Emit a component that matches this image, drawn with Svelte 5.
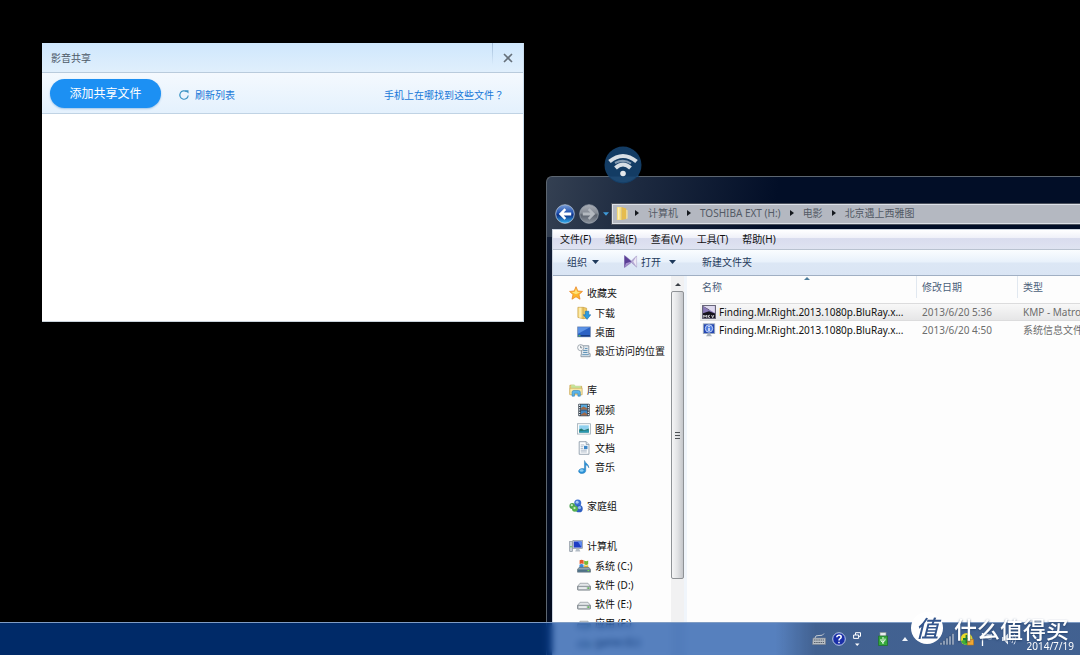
<script>
  const crumbs = ['计算机', 'TOSHIBA EXT (H:)', '电影', '北京遇上西雅图'];
  const menus = ['文件(F)', '编辑(E)', '查看(V)', '工具(T)', '帮助(H)'];
  const groups = [
    { icon: 'star', label: '收藏夹', items: [['download', '下载'], ['desktop', '桌面'], ['recent', '最近访问的位置']] },
    { icon: 'library', label: '库', items: [['video', '视频'], ['picture', '图片'], ['document', '文档'], ['music', '音乐']] },
    { icon: 'homegroup', label: '家庭组', items: [] },
    { icon: 'computer', label: '计算机', items: [['system', '系统 (C:)'], ['drive', '软件 (D:)'], ['drive', '软件 (E:)'], ['drive', '应用 (F:)'], ['drive', 'game (G:)']] }
  ];
  const files = [
    { icon: 'mkv', name: 'Finding.Mr.Right.2013.1080p.BluRay.x...', date: '2013/6/20 5:36', type: 'KMP - Matroska', selected: true },
    { icon: 'info', name: 'Finding.Mr.Right.2013.1080p.BluRay.x...', date: '2013/6/20 4:50', type: '系统信息文件', selected: false }
  ];
</script>

{#snippet icon(name)}
  <svg class="icon" viewBox="0 0 16 16" aria-hidden="true">
    {#if name === 'star'}
      <path d="M8 .8l2.1 4.9 5.3.5-4 3.6 1.2 5.3L8 12.3l-4.6 2.8 1.2-5.3-4-3.6 5.3-.5z" fill="#fdb62c" stroke="#e8862a" stroke-width=".9" />
      <path d="M8 3l1.4 3.7 3.6.3-5 2.4L3 7l3.6-.3z" fill="#ffe27a" />
    {:else if name === 'download'}
      <path d="M1 1.500h6v13L1 13z" fill="#f7dc84" stroke="#c9a14a" stroke-width=".8" />
      <path d="M7 1.500l4 1v11.500l-4 .5z" fill="#f2cb62" stroke="#c9a14a" stroke-width=".8" />
      <path d="M3.500 2v11.500" stroke="#fff3c0" stroke-width="1.500" />
      <path d="M9.500 6h4v4h2.300l-4.300 5.300L7.200 10h2.300z" fill="#2c9be0" stroke="#1668a8" stroke-width=".6" />
    {:else if name === 'desktop'}
      <rect x=".7" y="2.200" width="14.600" height="11.300" fill="#2b62c4" stroke="#7d93b5" stroke-width=".9" />
      <path d="M1.200 2.700h13.600L1.200 10z" fill="#5c93e6" />
      <rect x="1.200" y="11.500" width="13.600" height="1.700" fill="#173a80" />
      <rect x="1.500" y="11.700" width="2.500" height="1.300" fill="#6ad06a" />
    {:else if name === 'recent'}
      <path d="M5 2h8.500v9H15v3.500H4.500V12H5z" fill="#dfe7ed" stroke="#7c8995" stroke-width=".9" />
      <path d="M6 12.200h7.500M7 7.500h5M7 9.700h5M9 5.200h3" stroke="#5a8fb4" stroke-width="1.100" />
      <circle cx="4.200" cy="4.200" r="3.500" fill="#f8fafb" stroke="#8d979f" stroke-width=".9" />
      <path d="M4.200 2v2.400H6" stroke="#4a5a68" stroke-width=".8" fill="none" />
    {:else if name === 'library'}
      <path d="M1 2.500h5l1 1.300h7.500V13H1z" fill="#f3d57a" stroke="#c39b43" stroke-width=".8" />
      <path d="M2.500 2h4l1 1.500h6v3h-11z" fill="#c5e39a" />
      <path d="M1 6h14v7.500H1z" fill="#fbe9a6" stroke="#c9a955" stroke-width=".7" />
      <path d="M3.500 15V10.500q0-2 2.200-2h5q2.200 0 2.200 2V15h-2.700v-3.200H6.200V15z" fill="#5bb5ea" stroke="#2a7db6" stroke-width=".7" />
    {:else if name === 'video'}
      <rect x="1.500" y=".8" width="13" height="14.400" rx=".8" fill="#35404c" />
      <rect x="4.500" y="1.800" width="7" height="5.700" fill="#58a8dc" />
      <rect x="4.500" y="8.500" width="7" height="5.700" fill="#3e86c4" />
      <path d="M4.500 6l3-2 4 2v1.500h-7zM4.500 13l4-2.500 3 2v1.700h-7z" fill="#a06a48" />
      <path d="M3 1.800v13M13 1.800v13" stroke="#dfe6ec" stroke-width="1.400" stroke-dasharray="1.500 1.200" />
    {:else if name === 'picture'}
      <rect x=".7" y="2" width="14.600" height="11.800" fill="#fafcfc" stroke="#8fa0ac" stroke-width=".8" />
      <rect x="2.500" y="3.800" width="11" height="8.200" fill="#8fd0ee" />
      <path d="M2.500 8.500l2.500-1.200 3 2 5.500-1.800V12h-11z" fill="#267a72" />
      <path d="M2.500 10.500l11-1V12h-11z" fill="#2a97b2" />
    {:else if name === 'document'}
      <path d="M2.500.8h8l3.200 3.200v11.200H2.500z" fill="#fcfdfe" stroke="#8190a0" stroke-width=".9" />
      <path d="M10.500.8V4h3.200" fill="#dbe5ee" stroke="#8190a0" stroke-width=".8" />
      <path d="M4.200 4.500h4M4.200 6.500h3M4.200 8.500h3M4.200 10.500h7M4.200 12.500h7" stroke="#9aaaba" stroke-width=".9" />
      <rect x="8" y="5.500" width="4" height="3.800" fill="#3d86c6" />
    {:else if name === 'music'}
      <path d="M8.500.5c.6 3 5.300 4 5 8.500-.6-2-2-3-3.500-3.200V12c0 2.200-2 3.500-4.300 3.500S1.500 14 1.800 12.500s2.400-3 4.700-2.700c.8 0 2 .5 2 .5z" fill="#2a92d8" stroke="#1b6fae" stroke-width=".5" />
      <ellipse cx="5.300" cy="12" rx="2.200" ry="1.400" fill="#8fd0f5" />
    {:else if name === 'homegroup'}
      <circle cx="10" cy="4.500" r="4" fill="#3c6fd0" />
      <circle cx="3.800" cy="8" r="3.300" fill="#4aa04c" />
      <circle cx="11.500" cy="11" r="4.200" fill="#2f5fc2" />
      <circle cx="6.800" cy="11.200" r="3.400" fill="#55b04e" />
      <circle cx="9.300" cy="3.600" r="1.700" fill="#a8cbf5" />
      <circle cx="3.200" cy="7" r="1.300" fill="#c8ecc0" />
      <circle cx="12" cy="9.800" r="1.800" fill="#8fb8f0" />
      <circle cx="6.300" cy="10.300" r="1.300" fill="#c8ecc0" />
    {:else if name === 'computer'}
      <rect x=".8" y="3" width="3.200" height="11.500" fill="#c9d0d8" stroke="#7b8794" stroke-width=".7" />
      <rect x="1.500" y="8" width="1.500" height="1.500" fill="#55c03c" />
      <rect x="4.500" y="1.800" width="11" height="9" fill="#dfe4ea" stroke="#77838f" stroke-width=".7" />
      <rect x="5.500" y="2.800" width="9" height="7" fill="#1d3cc4" />
      <path d="M10 2.800h4.500v7z" fill="#5f8df0" />
      <path d="M8.500 11h3l1.500 3.200H7z" fill="#b3bcc6" />
    {:else if name === 'system'}
      <path d="M3 1.500q2.200-1.500 4.600 0v4.300q-2.300-1.300-4.600 0z" fill="#e65a2a" />
      <path d="M8.200 1.800q2.300 1.300 4.600 0v4.300q-2.300 1.300-4.600 0z" fill="#79b832" />
      <path d="M2.800 6.500q2.200-1.300 4.700 0v4H2.800z" fill="#3c8ad8" />
      <path d="M8.200 6.800q2.300 1.300 4.600 0v4H8.200z" fill="#f5bd2c" />
      <path d="M2.500 9.500h11L15.500 12v3H.5v-3z" fill="#8fa3b0" stroke="#52636f" stroke-width=".7" />
      <rect x="1" y="12" width="14" height="2.700" fill="#4e7186" />
      <rect x="12" y="12.600" width="2" height="1.300" fill="#7be04c" />
    {:else if name === 'drive'}
      <path d="M3.500 6h9l2.800 3.500v4H.7v-4z" fill="#e4e7e9" stroke="#8a9298" stroke-width=".8" />
      <path d="M.7 9.500h14.600V13q0 .8-1 .8H1.700q-1 0-1-.8z" fill="#bcc2c7" stroke="#747c83" stroke-width=".8" />
      <rect x="2" y="10.500" width="9" height="2" fill="#eceff0" />
      <rect x="12" y="10.800" width="2" height="1.500" fill="#4fb83c" />
    {:else if name === 'mkv'}
      <rect x=".4" y=".4" width="15.200" height="15.200" fill="#15131c" stroke="#6c6880" stroke-width=".8" />
      <path d="M1.200 1.200l6.500 4.300 7-4.300v8.500L8 7 1.200 9.500z" fill="#8a7ab8" />
      <path d="M1.200 1.200L14.700 9V1.200z" fill="#ded9ef" />
      <path d="M2 14.500v-3l1.500 2 1.500-2v3M7 11.500v3M9 11.500L7 13l2 1.500M11 11.500l1.200 3 1.300-3" fill="none" stroke="#e8e8ee" stroke-width="1" />
    {:else if name === 'info'}
      <rect x="1.500" y="1" width="13" height="11" fill="#2447b4" stroke="#9ba8b8" stroke-width="1" />
      <circle cx="8" cy="6.300" r="4.200" fill="#4e7ce0" stroke="#e3ecfc" stroke-width=".9" />
      <path d="M8 5.700V9M8 3.500v1.300" stroke="#fff" stroke-width="1.500" />
      <path d="M6.500 12.500h3l2 2.500h-7z" fill="#a7b0ba" />
    {/if}
  </svg>
{/snippet}

<main class="screen">
  <section class="share" aria-label="影音共享">
    <header class="share-title">
      <h1>影音共享</h1>
      <button class="close" aria-label="关闭">
        <svg viewBox="0 0 10 10"><path d="M1 1l8 8M9 1L1 9" stroke="#66707a" stroke-width="1.600" /></svg>
      </button>
    </header>
    <div class="share-bar">
      <button class="add">添加共享文件</button>
      <a class="refresh" href="#refresh">
        <svg viewBox="0 0 12 12"><path d="M10.200 6.500A4.200 4.200 0 1 1 8.700 2.800" fill="none" stroke="#3c94c4" stroke-width="1.200" /><path d="M6.800 1.200h3.700v3.300z" fill="#3c94c4" /></svg>
        刷新列表
      </a>
      <a class="where" href="#help">手机上在哪找到这些文件？</a>
    </div>
  </section>

  <section class="explorer" aria-label="资源管理器">
    <div class="address-row">
      <button class="nav" aria-label="后退">
        <svg viewBox="0 0 20 20">
          <defs>
            <linearGradient id="back" x1="0" y1="0" x2="0" y2="1"><stop offset="0" stop-color="#7a9ed8" /><stop offset=".45" stop-color="#1d4fae" /><stop offset=".55" stop-color="#0b2f84" /><stop offset="1" stop-color="#35b4f4" /></linearGradient>
            <linearGradient id="fwd" x1="0" y1="0" x2="0" y2="1"><stop offset="0" stop-color="#a9aeb6" /><stop offset=".45" stop-color="#858b95" /><stop offset=".55" stop-color="#5c636f" /><stop offset="1" stop-color="#8e959f" /></linearGradient>
          </defs>
          <circle cx="10" cy="10" r="9.300" fill="url(#back)" stroke="#b9c8dc" stroke-width=".8" />
          <path d="M9.500 4.300L3.800 10l5.700 5.700 1.700-1.700-2.500-2.500h7.500V8.500H8.700L11.200 6z" fill="#fff" />
        </svg>
      </button>
      <button class="nav" aria-label="前进">
        <svg viewBox="0 0 20 20">
          <circle cx="10" cy="10" r="9.300" fill="url(#fwd)" stroke="#9aa3af" stroke-width=".8" />
          <path d="M10.500 4.300l5.700 5.700-5.700 5.700L8.800 14l2.500-2.500H3.800V8.500h7.500L8.800 6z" fill="#b4b9c0" />
        </svg>
      </button>
      <button class="history" aria-label="最近的页面"><svg viewBox="0 0 7 4"><path d="M0 0h7L3.500 4z" fill="#3f9ad8" /></svg></button>
      <nav class="address" aria-label="地址">
        <svg class="folder" viewBox="0 0 14 16"><path d="M1 1h5v14H1z" fill="#f6dc7c" /><path d="M6 1l5 1.500V14l-5 1z" fill="#e5bc4e" /><path d="M11 4l1.500.5v9L11 14z" fill="#f5e19a" /><path d="M3 1.500v13" stroke="#fff2b8" stroke-width="1.500" /></svg>
        {#each crumbs as crumb}
          <svg class="sep" viewBox="0 0 4 6"><path d="M0 0l4 3-4 3z" fill="#14181e" /></svg>
          <a href="#crumb">{crumb}</a>
        {/each}
      </nav>
    </div>

    <div class="client">
      <div class="menubar">
        {#each menus as menu}<button>{menu}</button>{/each}
      </div>
      <div class="commands">
        <button class="organize">组织 <svg class="drop" viewBox="0 0 7 4"><path d="M0 0h7L3.500 4z" fill="#1e395b" /></svg></button>
        <button class="open">
          <svg class="kmp" viewBox="0 0 15 14"><path d="M.5.5L8 6.500 13.500 1v12L8 8 .5 13.500z" fill="#b9acd6" stroke="#8c7db4" stroke-width=".6" /><path d="M.5.5L8 7 .5 13.500z" fill="#5b3f96" /><path d="M2 9l6-2-7.500 6.500z" fill="#a793cf" /><path d="M13.500 1v12L10 7z" fill="#ece8f5" /></svg>
          打开
          <svg class="drop" viewBox="0 0 7 4"><path d="M0 0h7L3.500 4z" fill="#1e395b" /></svg>
        </button>
        <button>新建文件夹</button>
      </div>
      <div class="body">
        <nav class="tree" aria-label="导航">
          {#each groups as group}
            <ul>
              <li class="root">{@render icon(group.icon)}<a href="#item">{group.label}</a></li>
              {#each group.items as [ic, label]}
                <li>{@render icon(ic)}<a href="#item">{label}</a></li>
              {/each}
            </ul>
          {/each}
        </nav>
        <div class="scroll" aria-hidden="true">
          <svg class="up" viewBox="0 0 6 3"><path d="M0 3h6L3 0z" fill="#3a3f45" /></svg>
          <div class="thumb"><i></i><i></i><i></i></div>
        </div>
        <div class="files">
          <table>
            <colgroup><col class="c-name" /><col class="c-date" /><col class="c-type" /></colgroup>
            <thead>
              <tr>
                <th>名称<svg class="sort" viewBox="0 0 6 3"><path d="M0 3h6L3 0z" fill="#4d7d9c" /></svg></th>
                <th>修改日期</th>
                <th>类型</th>
              </tr>
            </thead>
            <tbody>
              {#each files as file}
                <tr class:selected={file.selected}>
                  <td class="name"><div>{@render icon(file.icon)}<span>{file.name}</span></div></td>
                  <td>{file.date}</td>
                  <td>{file.type}</td>
                </tr>
              {/each}
            </tbody>
          </table>
        </div>
      </div>
    </div>
  </section>

  <svg class="wifi" viewBox="0 0 38 38" aria-hidden="true">
    <circle cx="19" cy="19" r="18.500" fill="#15406a" />
    <path d="M1 22a18.500 18.500 0 0 0 36 0v9H1z" fill="#1d4a74" clip-path="circle(18.500px at 19px 19px)" />
    <path d="M5.500 15.500q13.500-11 27 0" fill="none" stroke="#e4ebf2" stroke-width="4" />
    <path d="M11.500 22q7.500-7 15 0" fill="none" stroke="#e4ebf2" stroke-width="4" />
    <path d="M11 17q8.500-4.500 16 .5" fill="none" stroke="#8da5bd" stroke-width="2" />
    <circle cx="19" cy="27.500" r="2.800" fill="#f2f5f8" />
  </svg>

  <footer class="taskbar">
    <div class="tray">
      <svg class="t-key" viewBox="0 0 14 12"><path d="M1 5h12.500v6.500H.5z" fill="#b9bfc6" stroke="#7a828c" stroke-width=".6" /><path d="M3 5q0-3 4-2.500T12 .5" fill="none" stroke="#c3c9d0" /><path d="M2 7h10M2 9.500h10" stroke="#555e69" stroke-width="1" stroke-dasharray="1.500 .7" /></svg>
      <svg class="t-help" viewBox="0 0 14 14"><circle cx="7" cy="7" r="6.300" fill="#1a2fa8" stroke="#b9c7e6" stroke-width="1" /><path d="M4.800 5.300q.2-2 2.300-2t2.100 1.700q0 1-1.100 1.600T7 8.500M7 9.800v1.500" fill="none" stroke="#fff" stroke-width="1.500" /></svg>
      <svg class="t-lang" viewBox="0 0 8 14"><path d="M2.500 3V.7h5v3.600H5.500M.6 3h5v3.400h-5z" fill="none" stroke="#fff" stroke-width="1" /><path d="M2 11.500h4.500L4.200 14z" fill="#fff" /></svg>
      <svg class="t-usb" viewBox="0 0 10 14"><rect x="2" y=".5" width="6" height="3.500" fill="#e9eef0" stroke="#89938f" stroke-width=".6" /><path d="M.5 4h9v9.500h-9z" fill="#35a83c" stroke="#1b6e28" stroke-width=".7" /><path d="M5 5v7M3 7v2l2 1.500M7 6.500v2L5 10" fill="none" stroke="#f2fff2" stroke-width="1" /></svg>
      <svg class="t-more" viewBox="0 0 6 4"><path d="M0 4h6L3 0z" fill="#eef3fa" /></svg>
      <svg class="t-signal" viewBox="0 0 15 12"><path d="M1 12V9.500h2V12zM4 12V7.500h2V12zM7 12V5h2v7zM10 12V3h2v9zM13 12V.5h2V12z" fill="#a9b8ce" stroke="#33486a" stroke-width=".5" /></svg>
      <svg class="t-shield" viewBox="0 0 14 14"><circle cx="6.500" cy="7" r="6" fill="#e9dc2a" /><path d="M1 9a6 6 0 0 0 10 2L6.500 7z" fill="#3fae3a" /><path d="M6.500 3v8M3 7h7" stroke="#1f7f31" stroke-width="1.800" /><rect x="7.500" y="7.500" width="6" height="5.500" fill="#f3a832" stroke="#b97515" stroke-width=".6" /></svg>
      <svg class="t-flag" viewBox="0 0 12 14"><path d="M1.500 1v13" stroke="#fff" stroke-width="1.300" /><path d="M2.500 2q3-1 4.500 0t4 0v5q-2.500 1-4 0t-4.500 0z" fill="#dfe7f3" /></svg>
      <svg class="t-sound" viewBox="0 0 14 12"><path d="M0 4h2.500L6 .5v11L2.500 8H0z" fill="#f5f8fc" /><path d="M8 3.500q1.500 2.500 0 5M10 2q2.500 4 0 8M12 .7q3.300 5.300 0 10.600" fill="none" stroke="#dce5f2" stroke-width="1" /></svg>
      <time>2014/7/19</time>
    </div>
  </footer>

  <div class="mark"><span class="seal">值</span><span>什么值得买</span></div>
</main>

<style>
  :global(body) { margin: 0; background: #000; }
  .screen {
    position: relative;
    min-height: 100vh;
    overflow: hidden;
    background: #000;
    font: 10px/14px "Noto Sans", "Noto Sans CJK SC", sans-serif;
    color: #111;
  }
  button { font: inherit; color: inherit; border: 0; padding: 0; margin: 0; background: none; }
  a { color: inherit; text-decoration: none; }
  svg { display: block; flex: none; }
  ul { list-style: none; margin: 0; padding: 0; }

  .share { position: absolute; left: 42px; top: 43px; width: 482px; height: 279px; background: #fff; display: flex; flex-direction: column; box-sizing: border-box; border-right: 1px solid #c9dcec; border-bottom: 1px solid #c9d3dc; }
  .share-title { display: flex; align-items: center; justify-content: space-between; height: 29px; padding-left: 9px; background: linear-gradient(#cfe7fd, #e0effc); border-bottom: 1px solid #b9cbdc; }
  h1 { font: inherit; margin: 0; color: #4c5866; }
  .close { width: 31px; height: 29px; display: grid; place-items: center; background: linear-gradient(#a3bdd8, transparent 22px) left / 1px 100% no-repeat; }
  .close svg { width: 10px; height: 10px; }
  .share-bar { display: flex; align-items: center; height: 40px; padding: 0 19px 0 8px; background: linear-gradient(#f4f9fe, #e4f1fd); border-bottom: 1px solid #c0d3e4; color: #1878d8; }
  .add { width: 111px; height: 29px; padding-top: 1px; border-radius: 15px; background: #1c90f3; color: #fff; font-size: 12px; box-shadow: 0 1px 2px #9cc4e8; }
  .refresh { display: flex; align-items: center; gap: 5px; margin-left: 17px; padding-top: 3px; }
  .refresh svg { width: 12px; height: 12px; }
  .where { margin-left: auto; padding-top: 3px; font-family: "Noto Sans CJK TC", sans-serif; }

  .explorer { position: absolute; left: 546px; right: 0; top: 176px; bottom: 0; box-sizing: border-box; padding: 26px 0 0 5px; border: solid #5d6670; border-width: 1px 0 0 1px; border-radius: 6px 0 0 0; background: linear-gradient(100deg, #344052 0, #1d2a40 90px, #020e27 230px) top / 100% 60px no-repeat, linear-gradient(#1a2740, #030c20 180px); display: flex; flex-direction: column; }
  .address-row { display: flex; align-items: center; height: 22px; padding-left: 3px; }
  .nav { width: 20px; height: 20px; margin-right: 4px; }
  .nav svg { width: 20px; height: 20px; }
  .history { margin-right: 3px; }
  .history svg { width: 6px; height: 4px; }
  .address { flex: 1; display: flex; align-items: center; height: 20px; box-sizing: border-box; padding: 0 0 2px 3px; background: #b4b8c1; border: solid #dde1e8; border-width: 1px 0 1px 1px; color: #535a65; white-space: nowrap; outline: 1px solid #4a505c; }
  .folder { width: 13px; height: 15px; margin-right: 6px; }
  .sep { width: 4px; height: 6px; margin-right: 9px; }
  .address a { margin-right: 9px; }

  .client { flex: 1; min-height: 0; margin-top: 4px; display: flex; flex-direction: column; border: solid #cdd5e0; border-width: 1px 0 0 1px; background: #fdfdfd; }
  .menubar { display: flex; align-items: center; gap: 14px; height: 17px; padding: 0 0 2px 7px; background: linear-gradient(#fff, #f0f1f9 40%, #d9dcee 45%, #dfe3f1); border-bottom: 1px solid #b9c2d0; }
  .commands { display: flex; align-items: center; height: 23px; padding: 0 0 2px 14px; background: linear-gradient(#fafdff, #e8f1fb 48%, #dce7f5 52%, #dae5f4); border-bottom: 1px solid #a0afc3; color: #1e395b; }
  .commands button { display: flex; align-items: center; }
  .drop { width: 7px; height: 4px; margin-left: 5px; }
  .organize { margin-right: 25px; }
  .open { margin-right: 26px; gap: 3px; }
  .kmp { width: 14px; height: 13px; }
  .body { flex: 1; min-height: 0; display: flex; overflow: hidden; }

  .tree { width: 118px; flex: none; padding-top: 7px; overflow: hidden; white-space: nowrap; }
  .tree ul { margin-bottom: 20px; }
  .tree li { display: flex; align-items: center; gap: 4px; height: 19px; padding-left: 24px; }
  .tree .root { height: 20px; padding-left: 16px; }
  .icon { width: 14px; height: 14px; }
  .scroll { width: 13px; flex: none; display: flex; flex-direction: column; align-items: center; background: #f1f1f2; border-right: 3px solid #f0f5fb; }
  .up { width: 6px; height: 3px; margin: 7px 0 5px; }
  .thumb { width: 11px; height: 286px; border: 1px solid #8f9296; border-radius: 2px; background: linear-gradient(90deg, #f5f5f6, #e2e3e5 50%, #c4c6ca); display: flex; flex-direction: column; align-items: center; justify-content: center; gap: 2px; }
  .thumb i { width: 5px; height: 1px; background: #4e5256; }

  .files { flex: 1; min-width: 0; overflow: hidden; padding-left: 13px; }
  table { width: 100%; table-layout: fixed; border-collapse: separate; border-spacing: 0; white-space: nowrap; }
  .c-name { width: 217px; }
  .c-date { width: 101px; }
  th { position: relative; height: 22px; padding: 0 0 0 5px; text-align: left; font-weight: 400; color: #4c607a; border-right: 1px solid #e1e8f0; }
  th:first-child { padding-left: 2px; }
  th:last-child { border-right: 0; }
  thead::after { content: ""; display: block; height: 5px; }
  .sort { position: absolute; top: 1px; left: 50%; width: 6px; height: 3px; margin-left: -4px; }
  td { height: 18px; padding: 0 0 0 5px; box-sizing: border-box; color: #6d6d6d; overflow: hidden; }
  td.name { padding-left: 2px; color: #111; }
  td.name div { display: flex; align-items: center; gap: 3px; }
  .selected td { background: linear-gradient(#f8f8f8, #e6e6e7); border: solid #dcdcdd; border-width: 1px 0; }

  .wifi { position: absolute; left: 604px; top: 146px; width: 38px; height: 38px; opacity: .95; }

  .taskbar { position: absolute; left: 0; right: 0; bottom: 0; height: 33px; box-sizing: border-box; border-top: 1px solid #7f9cc4; background: linear-gradient(90deg, transparent calc(100% - 305px), rgba(34, 50, 76, .4) calc(100% - 265px)), rgba(0, 64, 158, .66); backdrop-filter: blur(3px); }
  .tray { display: flex; align-items: center; justify-content: flex-end; height: 32px; padding-right: 6px; }
  .t-key { width: 14px; height: 12px; margin-right: 6px; }
  .t-help { width: 14px; height: 14px; margin-right: 7px; }
  .t-lang { width: 8px; height: 14px; margin-right: 17px; }
  .t-usb { width: 10px; height: 14px; margin-right: 14px; }
  .t-more { width: 6px; height: 4px; margin-right: 31px; }
  .t-signal { width: 15px; height: 12px; margin-right: 6px; }
  .t-shield { width: 14px; height: 14px; margin-right: 7px; }
  .t-flag { width: 12px; height: 14px; margin-right: 9px; }
  .t-sound { width: 14px; height: 12px; margin-right: 11px; }
  time { align-self: flex-end; margin-bottom: 2px; color: #fff; }

  .mark { position: absolute; right: 11px; bottom: 11px; display: flex; align-items: center; gap: 11px; color: #fff; font: 500 23px/32px "Noto Sans CJK SC", sans-serif; text-shadow: 0 1px 2px #27446e; }
  .seal { width: 32px; height: 32px; border-radius: 50%; background: #fff; color: #33558c; text-align: center; font-size: 23px; line-height: 30px; font-style: italic; text-shadow: none; }
</style>
